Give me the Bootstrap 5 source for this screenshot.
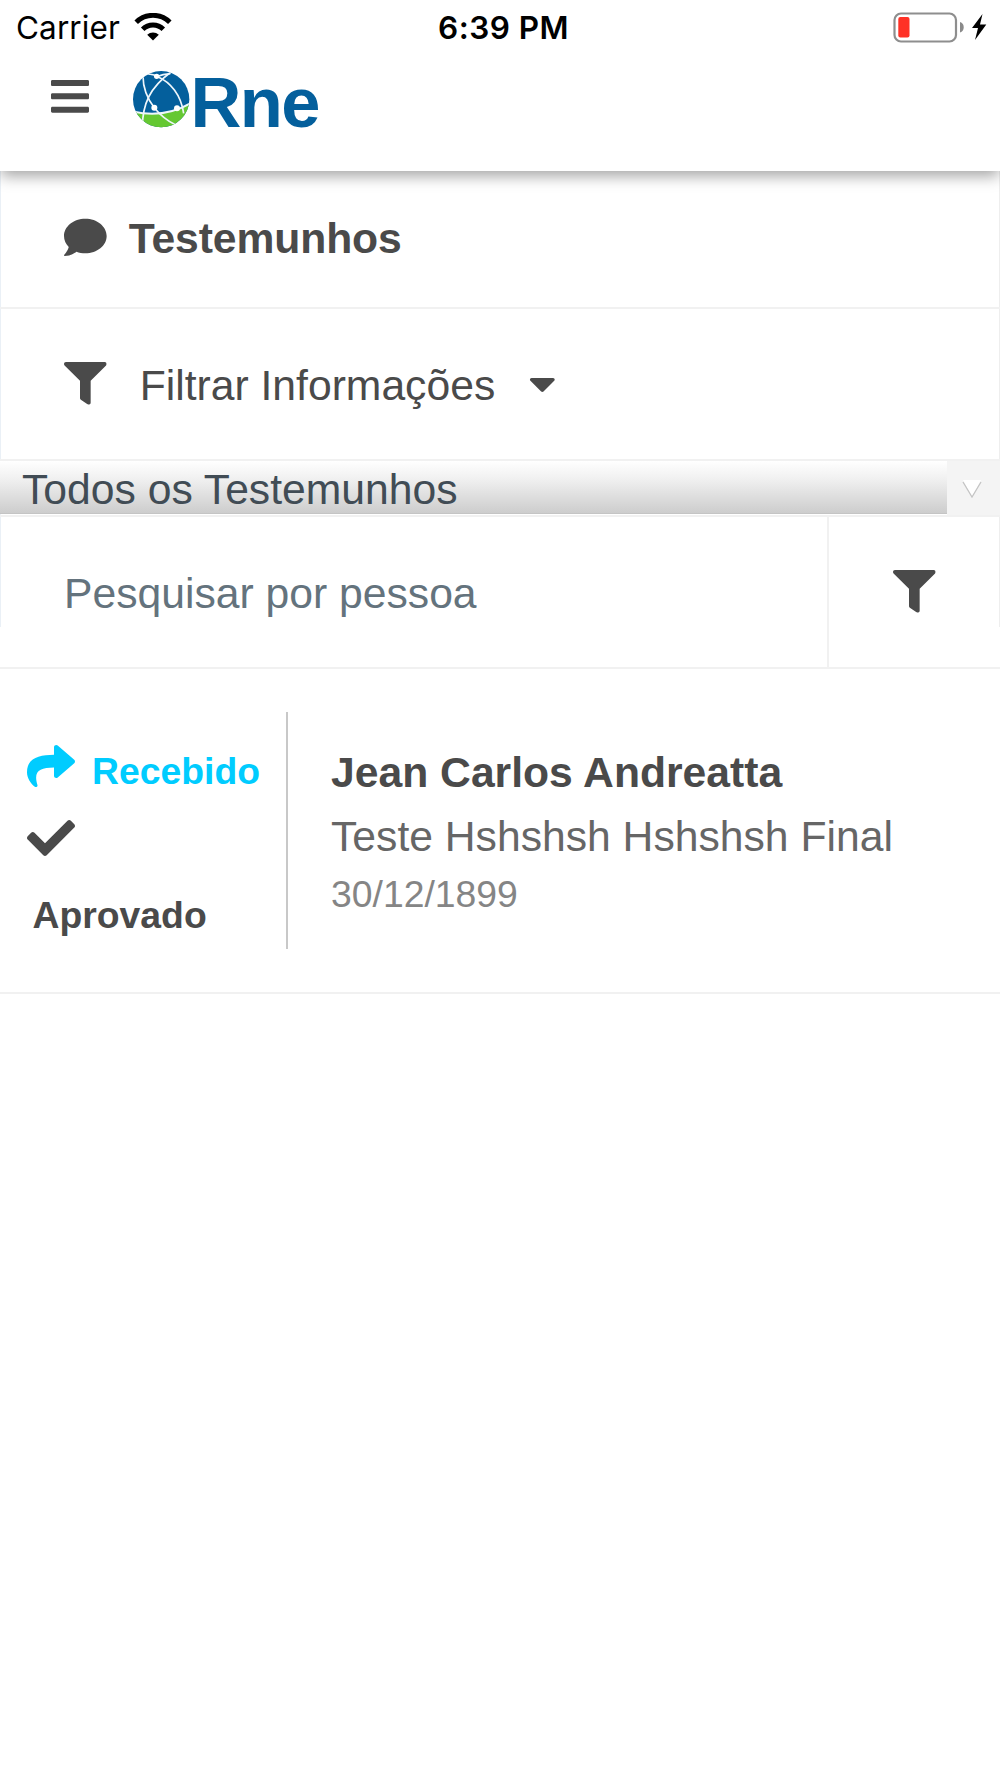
<!DOCTYPE html>
<html lang="pt-BR">
<head>
<meta charset="utf-8">
<meta name="viewport" content="width=device-width, initial-scale=1">
<title>Testemunhos</title>
<link href="https://cdn.jsdelivr.net/npm/bootstrap@5.3.0/dist/css/bootstrap.min.css" rel="stylesheet">
<style>
body{font-family:"Liberation Sans",Arial,sans-serif;font-size:42.67px;line-height:50px;color:#4a4a4a;background:#fff;overflow:hidden}
svg{display:block;flex:none}
.fa-ico{width:42.67px;height:42.67px;fill:#4a4a4a}
.app-head{height:171px;background:#fff;box-shadow:0 6px 14px -1px rgba(0,0,0,.36);position:relative;z-index:2}
.status{height:48px;font-family:Inter,sans-serif;color:#000;font-size:31.5px;line-height:48px;padding:0 13px 0 16px}
.status>div{flex:1 1 0}
.carrier{padding-top:7px;letter-spacing:.1px}
.clock{font-weight:600;letter-spacing:.45px;flex:0 0 auto!important;margin-left:4px;padding-top:4px}
.brandbar{padding:22px 0 0 50.5px}
.brandbar .menu{margin-top:5px;width:38px}
.brandbar .globe{margin-left:43.500px}
.brandname{font-weight:700;font-size:70.5px;line-height:58px;color:#045f9c;letter-spacing:-1.6px;margin-left:.5px;padding-top:4px}
.framed{border-left:1px solid #eaf0f6;border-right:1px solid #eee;height:456px;margin-bottom:-456px;pointer-events:none}
.line-b{border-bottom:2px solid #f1f1f1}
.r-title{height:137.5px;padding:0 64px 2px}
.r-title .lbl{margin-left:22px;letter-spacing:-.1px}
.r-filter{height:152px;padding:0 64px}
.r-filter .lbl{margin-left:33px;padding-top:2px}
.r-select{height:56px;color:#414c55}
.r-select .grad{background:linear-gradient(#fff,#f0f0f0 35%,#cdcdcd);height:53px;border-bottom:1px solid #c4c4c4;line-height:56px;padding-left:22px;width:947px}
.r-select .arrow{background:#f4f4f4;width:53px;height:54px}
.r-search{height:152px}
.r-search .field{width:829px;border-right:2px solid #f1f1f1;color:#64737d;padding:2px 0 0 64px}
.item{height:325px;padding:43px 0}
.state{width:287.5px;border-right:2px solid #c8c8c8;height:237px;font-size:37.33px;font-weight:700;padding:30px 0 0 26.5px}
.state .ico48{width:48px;height:48px}
.info{padding:35px 0 0 43.500px}
.info .teste{color:#666}
.info .dt{color:#858585;font-size:37.33px}
</style>
<script src="https://cdn.jsdelivr.net/npm/bootstrap@5.3.0/dist/js/bootstrap.bundle.min.js"></script>
</head>
<body>
<svg width="0" height="0" class="position-absolute"><defs>
<symbol id="filter" viewBox="0 0 512 512"><path d="M487.976 0H24.028C2.71 0-8.047 25.866 7.058 40.971L192 225.941V432c0 7.831 3.821 15.17 10.237 19.662l80 55.98C298.02 518.69 320 507.493 320 487.98V225.941l184.947-184.97C520.021 25.896 509.338 0 487.976 0z"/></symbol>
</defs></svg>
<header class="app-head">
  <div class="status d-flex">
    <div class="d-flex align-items-center"><span class="carrier">Carrier</span>
      <svg style="margin:5px 0 0 14px" width="38" height="28" viewBox="0 0 38 28"><g fill="none" stroke="#000" stroke-width="5"><path d="M2.200 9.200A24 24 0 0 1 35.800 9.200"/><path d="M8.700 16.200A14.600 14.600 0 0 1 29.300 16.200"/></g><path d="M19 27.500l-5.800-5.700a8.500 8.500 0 0 1 11.600 0z"/></svg>
    </div>
    <div class="clock">6:39 PM</div>
    <div class="d-flex justify-content-end align-items-center">
      <svg style="margin-top:7px" width="94" height="31" viewBox="893 12 94 31"><rect x="894.500" y="13.500" width="61.500" height="28" rx="6.500" fill="#fff" stroke="#8e8e8e" stroke-width="2.200"/><rect x="898.300" y="17" width="11.200" height="20.600" rx="2" fill="#ff3126"/><path d="M960 22c5 1.500 5 9 0 10.500z" fill="#8a8a8a"/><path d="M982.500 14l-10.500 14h6l-3 12 11.300-15.500h-6.300z"/></svg>
    </div>
  </div>
  <div class="brandbar d-flex">
    <svg class="menu fa-ico" viewBox="0 0 448 512" preserveAspectRatio="none"><path d="M16 132h416c8.837 0 16-7.163 16-16V76c0-8.837-7.163-16-16-16H16C7.163 60 0 67.163 0 76v40c0 8.837 7.163 16 16 16zm0 160h416c8.837 0 16-7.163 16-16v-40c0-8.837-7.163-16-16-16H16c-8.837 0-16 7.163-16 16v40c0 8.837 7.163 16 16 16zm0 160h416c8.837 0 16-7.163 16-16v-40c0-8.837-7.163-16-16-16H16c-8.837 0-16 7.163-16 16v40c0 8.837 7.163 16 16 16z"/></svg>
    <svg class="globe" width="58" height="58" viewBox="35 30 174 174"><clipPath id="gc"><circle cx="122.500" cy="117.500" r="84.500"/></clipPath><g clip-path="url(#gc)"><path fill="#045f9c" d="M30 30h180v180H30z"/><path fill="#65c832" d="M36 154Q130 176 210 130V210H36z"/><g fill="none" stroke="#eef6fb" stroke-width="5"><path stroke-width="6" d="M36 154Q130 176 210 130"/><path d="M68 48C68 90 84 120 102 143S140 182 168 196"/><path d="M66 204C66 130 90 82 152 36"/><path d="M80 42Q100 42 112 50C150 66 182 104 190 160"/><path d="M108 50Q128 42 150 41"/></g><g fill="#fff"><circle cx="109" cy="49" r="8"/><circle cx="102" cy="143" r="9"/><circle cx="170" cy="145" r="9"/></g></g></svg>
    <span class="brandname">Rne</span>
  </div>
</header>
<main>
  <div class="framed"></div>
  <div class="r-title line-b d-flex align-items-center fw-bold">
    <svg class="fa-ico" viewBox="0 0 512 512"><path d="M256 32C114.600 32 0 125.100 0 240c0 49.600 21.400 95 57 130.700C44.500 421.100 2.700 466 2.200 466.500c-2.200 2.300-2.800 5.700-1.500 8.700S4.800 480 8 480c66.300 0 116-31.800 140.600-51.400 32.700 12.300 69 19.400 107.400 19.400 141.400 0 256-93.100 256-208S397.400 32 256 32z"/></svg>
    <span class="lbl">Testemunhos</span>
  </div>
  <div class="r-filter line-b d-flex align-items-center">
    <svg class="fa-ico"><use href="#filter"/></svg>
    <span class="lbl">Filtrar Informações</span>
    <svg class="fa-ico" style="width:26.670px;margin-left:33.500px" viewBox="0 0 320 512"><path d="M31.300 192h257.300c17.800 0 26.700 21.500 14.100 34.100L174.100 354.800c-7.800 7.800-20.500 7.800-28.300 0L17.200 226.100C4.600 213.500 13.500 192 31.300 192z"/></svg>
  </div>
  <div class="r-select line-b d-flex">
    <div class="grad">Todos os Testemunhos</div>
    <div class="arrow d-flex align-items-center justify-content-center"><svg width="20" height="18" viewBox="0 0 20 18" style="margin-left:-3px;margin-top:3px"><path fill="#fff" d="M1 0h18l-9 17z"/><path d="M1 2l9 15 9-15" fill="none" stroke="#c4c4c4" stroke-width="1.300"/></svg></div>
  </div>
  <div class="r-search line-b d-flex">
    <div class="field d-flex align-items-center">Pesquisar por pessoa</div>
    <div class="flex-fill d-flex align-items-center justify-content-center"><svg class="fa-ico"><use href="#filter"/></svg></div>
  </div>
  <div class="item line-b d-flex">
    <div class="state">
      <div class="d-flex" style="height:72px"><svg class="ico48" viewBox="0 0 512 512" fill="#0cf"><path d="M503.691 189.836L327.687 37.851C312.281 24.546 288 35.347 288 56.015v80.053C127.371 137.907 0 170.100 0 322.326c0 61.441 39.581 122.309 83.333 154.132 13.653 9.931 33.111-2.533 28.077-18.631C66.066 312.814 132.917 274.316 288 272.085V360c0 20.700 24.300 31.453 39.687 18.164l176.004-152c11.071-9.562 11.086-26.753 0-36.328z"/></svg><span style="color:#0cf;margin-left:17.500px;padding-top:4px">Recebido</span></div>
      <svg class="ico48" viewBox="0 0 512 512" fill="#4a4a4a"><path d="M173.898 439.404l-166.400-166.400c-9.997-9.997-9.997-26.206 0-36.204l36.203-36.204c9.997-9.998 26.207-9.998 36.204 0L192 312.690 432.095 72.596c9.997-9.997 26.207-9.997 36.204 0l36.203 36.204c9.997 9.997 9.997 26.206 0 36.204l-294.400 294.401c-9.998 9.997-26.207 9.997-36.204-.001z"/></svg>
      <div style="padding:28px 0 0 6px">Aprovado</div>
    </div>
    <div class="info">
      <div class="fw-bold">Jean Carlos Andreatta</div>
      <div class="teste" style="padding-top:14px">Teste Hshshsh Hshshsh Final</div>
      <div class="dt" style="padding-top:8px">30/12/1899</div>
    </div>
  </div>
</main>
</body>
</html>
